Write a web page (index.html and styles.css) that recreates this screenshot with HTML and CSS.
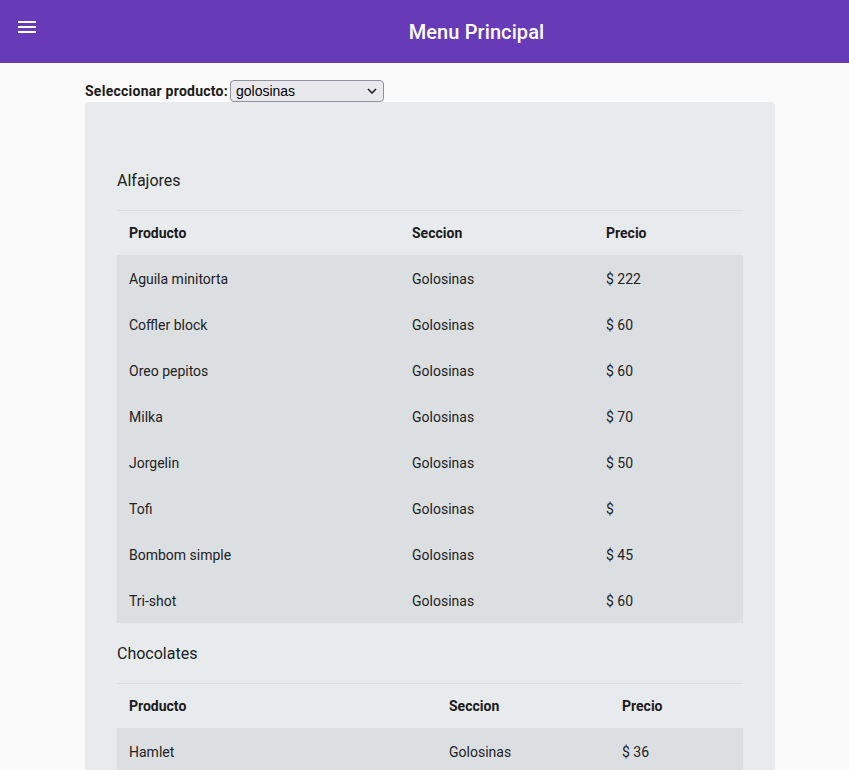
FILE: index.html
```html
<!DOCTYPE html>
<html lang="es">
<head>
<meta charset="utf-8">
<title>Menu Principal</title>
<link rel="stylesheet" href="styles.css">
</head>
<body>
<header class="toolbar">
  <button class="menu-btn" aria-label="menu">
    <svg width="18" height="12" viewBox="0 0 18 12"><rect x="0" y="0" width="18" height="2" fill="#fff"/><rect x="0" y="5" width="18" height="2" fill="#fff"/><rect x="0" y="10" width="18" height="2" fill="#fff"/></svg>
  </button>
  <h1 class="title">Menu Principal</h1>
</header>
<main class="content">
  <div class="picker">
    <label class="picker-label" for="prod">Seleccionar producto:</label>
    <select id="prod" class="picker-select"><option>golosinas</option></select>
  </div>
  <section class="card">
    <h2 class="group-title first">Alfajores</h2>
    <table class="products t1">
      <colgroup><col class="c1"><col class="c2"><col class="c3"></colgroup>
      <thead><tr><th>Producto</th><th>Seccion</th><th>Precio</th></tr></thead>
      <tbody>
        <tr><td>Aguila minitorta</td><td>Golosinas</td><td>$ 222</td></tr>
        <tr><td>Coffler block</td><td>Golosinas</td><td>$ 60</td></tr>
        <tr><td>Oreo pepitos</td><td>Golosinas</td><td>$ 60</td></tr>
        <tr><td>Milka</td><td>Golosinas</td><td>$ 70</td></tr>
        <tr><td>Jorgelin</td><td>Golosinas</td><td>$ 50</td></tr>
        <tr><td>Tofi</td><td>Golosinas</td><td>$ </td></tr>
        <tr><td>Bombom simple</td><td>Golosinas</td><td>$ 45</td></tr>
        <tr><td>Tri-shot</td><td>Golosinas</td><td>$ 60</td></tr>
      </tbody>
    </table>
    <h2 class="group-title">Chocolates</h2>
    <table class="products t2">
      <colgroup><col class="c1"><col class="c2"><col class="c3"></colgroup>
      <thead><tr><th>Producto</th><th>Seccion</th><th>Precio</th></tr></thead>
      <tbody>
        <tr><td>Hamlet</td><td>Golosinas</td><td>$ 36</td></tr>
        <tr><td>Cofler aireado</td><td>Golosinas</td><td>$ 80</td></tr>
      </tbody>
    </table>
  </section>
</main>
</body>
</html>
```
FILE: styles.css
```css
html, body {
  margin: 0;
  padding: 0;
  background: #fafafa;
  font-family: Roboto, "Liberation Sans", sans-serif;
  color: #212121;
}
.toolbar {
  height: 63px;
  background: #673ab7;
  color: #fff;
  display: flex;
  align-items: center;
}
.menu-btn {
  width: 56px;
  height: 63px;
  padding: 0 0 9px 18px;
  margin: 0;
  background: none;
  border: none;
  display: flex;
  align-items: center;
  justify-content: flex-start;
  cursor: pointer;
}
.title {
  flex: 1;
  margin: 0;
  text-align: center;
  font-size: 20px;
  font-weight: 500;
  letter-spacing: 0.1px;
  padding-left: 48px;
}
.content {
  padding: 16px 0 0 85px;
  width: 690px;
}
.picker {
  display: flex;
  align-items: center;
  height: 23px;
}
.picker-label {
  font-weight: 700;
  font-size: 14px;
  letter-spacing: 0.25px;
  color: #1a1a1a;
  margin-right: 2px;
}
.picker-select {
  appearance: none;
  -webkit-appearance: none;
  width: 154px;
  height: 22px;
  padding: 0 20px 0 5px;
  border: 1px solid #8f8f9d;
  border-radius: 4px;
  background-color: #e9e9ed;
  background-image: url("data:image/svg+xml;utf8,<svg xmlns='http://www.w3.org/2000/svg' width='10' height='6' viewBox='0 0 10 6'><path d='M1 1l4 4 4-4' fill='none' stroke='%23222' stroke-width='1.6'/></svg>");
  background-repeat: no-repeat;
  background-position: right 6px center;
  font-family: "Liberation Sans", Arial, sans-serif;
  font-size: 14px;
  color: #000;
}
.card {
  background: #e8ebee;
  border-radius: 4px;
  padding: 48px 32px 32px;
}
.group-title {
  margin: 18px 0 17px;
  padding-top: 1px;
  font-size: 16px;
  font-weight: 400;
  line-height: 24px;
  color: #212121;
}
.group-title.first {
  margin-top: 18px;
}
.products {
  width: 100%;
  table-layout: fixed;
  border-collapse: collapse;
  font-size: 14px;
}
.t1 .c1 { width: 283px; }
.t1 .c2 { width: 194px; }
.t1 .c3 { width: 149px; }
.t2 .c1 { width: 320px; }
.t2 .c2 { width: 173px; }
.t2 .c3 { width: 133px; }
.products thead tr {
  border-top: 1px solid #dcdfe2;
}
.products th {
  text-align: left;
  font-weight: 700;
  padding: 12px;
  line-height: 20px;
  color: #1a1a1a;
}
.products td {
  padding: 13px 12px 11px;
  line-height: 22px;
  background: #dcdfe2;
  color: #222;
}
```
